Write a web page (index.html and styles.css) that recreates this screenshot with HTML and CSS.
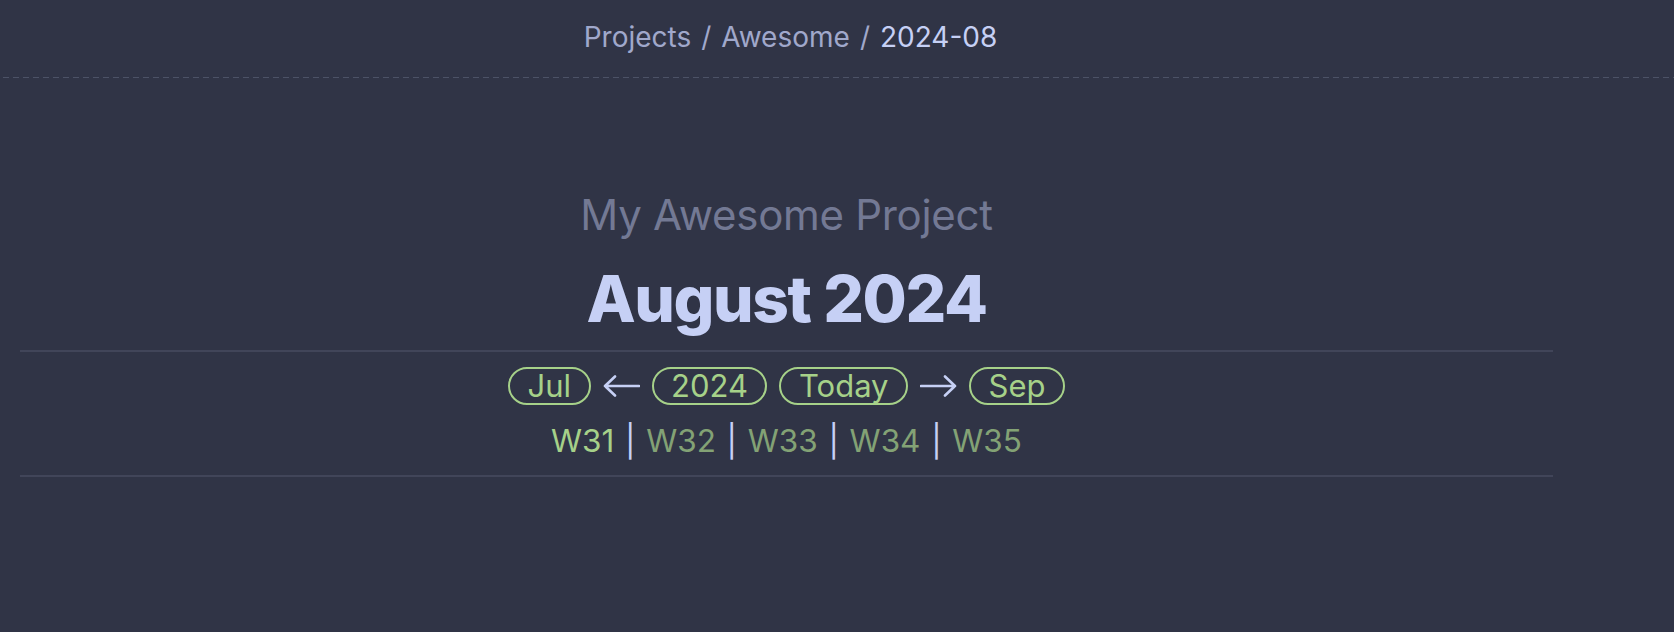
FILE: index.html
```html
<!DOCTYPE html>
<html lang="en">
<head>
<meta charset="utf-8">
<title>August 2024</title>
<link rel="stylesheet" href="styles.css">
</head>
<body>
<header class="topbar">
  <nav class="crumbs">
    <a class="crumb" href="#">Projects</a>
    <span class="sep">/</span>
    <a class="crumb" href="#">Awesome</a>
    <span class="sep">/</span>
    <span class="crumb current">2024-08</span>
  </nav>
</header>
<main class="page">
  <div class="project">My Awesome Project</div>
  <h1 class="month">August 2024</h1>
  <section class="navblock">
    <div class="nav-row">
      <a class="pill" href="#">Jul</a>
      <svg class="arrow" width="37" height="22" viewBox="0 0 37 22" aria-label="previous"><path d="M36 11H2M12 1.5L2 11l10 9.5" fill="none" stroke="#c6d0f5" stroke-width="2.6" stroke-linecap="round" stroke-linejoin="round"/></svg>
      <a class="pill" href="#">2024</a>
      <a class="pill" href="#">Today</a>
      <svg class="arrow" width="37" height="22" viewBox="0 0 37 22" aria-label="next"><path d="M1 11h34M25 1.5L35 11l-10 9.5" fill="none" stroke="#c6d0f5" stroke-width="2.6" stroke-linecap="round" stroke-linejoin="round"/></svg>
      <a class="pill" href="#">Sep</a>
    </div>
    <div class="weeks">
      <a class="week active" href="#">W31</a>
      <span class="bar">|</span>
      <a class="week" href="#">W32</a>
      <span class="bar">|</span>
      <a class="week" href="#">W33</a>
      <span class="bar">|</span>
      <a class="week" href="#">W34</a>
      <span class="bar">|</span>
      <a class="week" href="#">W35</a>
    </div>
  </section>
</main>
</body>
</html>
```
FILE: styles.css
```css
html, body {
  margin: 0;
  padding: 0;
  background: #303446;
  height: 100%;
}
body {
  font-family: Inter, "Noto Sans", sans-serif;
  color: #c6d0f5;
}
a {
  text-decoration: none;
  color: inherit;
}
.topbar {
  padding: 20px 0 24px 0;
  background-image: repeating-linear-gradient(to right, #4c5266 0 6px, transparent 6px 10px);
  background-size: 100% 1px;
  background-repeat: no-repeat;
  background-position: 3px 100%;
}
.crumbs {
  width: 1525px;
  margin-left: 28px;
  display: flex;
  justify-content: center;
  gap: 10px;
  font-size: 28px;
  line-height: 34px;
}
.crumb {
  color: #a0a8cb;
}
.crumb.current {
  color: #c6d0f5;
}
.sep {
  color: #a0a8cb;
}
.page {
  width: 1533px;
  margin-left: 20px;
  padding-top: 112px;
  text-align: center;
}
.project {
  font-size: 42px;
  line-height: 50px;
  letter-spacing: -0.3px;
  color: #737994;
}
.month {
  margin: 20px 0 0 0;
  font-size: 64px;
  line-height: 77px;
  font-weight: 800;
  letter-spacing: -1.4px;
  color: #c6d0f5;
}
.navblock {
  margin-top: 13px;
  border-top: 2px solid #414559;
  border-bottom: 2px solid #414559;
  padding: 15px 0 15px 0;
}
.nav-row {
  display: flex;
  justify-content: center;
  align-items: center;
  gap: 12px;
}
.pill {
  display: inline-block;
  height: 34px;
  line-height: 34px;
  padding: 0 17.5px;
  border: 2px solid #a6d189;
  border-radius: 19px;
  color: #a6d189;
  font-size: 31px;
}
.arrow {
  display: block;
}
.weeks {
  margin-top: 17px;
  font-size: 31.5px;
  line-height: 38px;
  display: flex;
  justify-content: center;
  gap: 10.7px;
}
.week {
  color: #83a275;
}
.week.active {
  color: #a6d189;
}
.bar {
  color: #c6d0f5;
}
```
